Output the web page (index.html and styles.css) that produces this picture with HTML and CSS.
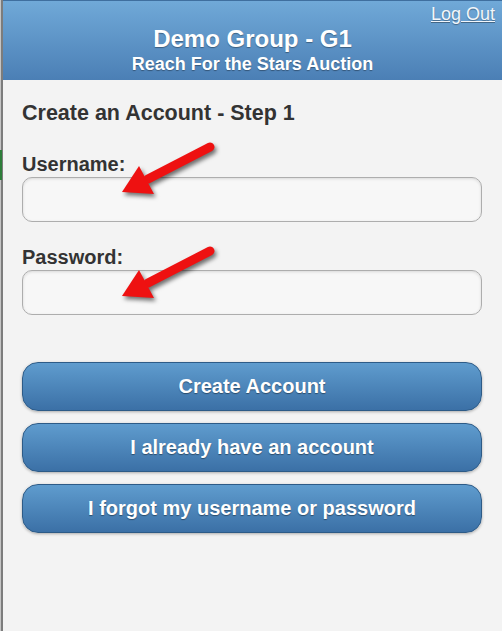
FILE: index.html
```html
<!DOCTYPE html>
<html lang="en">
<head>
   <meta charset="UTF-8">
   <meta name="viewport" content="width=device-width, initial-scale=1.0">
   <title>Create an Account</title>
   <link rel="stylesheet" href="styles.css">
</head>
<body>
<div class="page">
   <span class="edge-mark"></span>
   <header class="top">
      <a class="logout" href="#">Log Out</a>
      <h1>Demo Group - G1</h1>
      <p class="subtitle">Reach For the Stars Auction</p>
   </header>

   <main>
      <h2>Create an Account - Step 1</h2>
      <form class="signup">
         <div class="field">
            <label for="username">Username:</label>
            <input type="text" id="username">
            <svg class="arrow arrow-user" width="115" height="70" viewBox="0 0 115 70">
               <line x1="100" y1="12" x2="38" y2="44" stroke="#ee1111" stroke-width="9" stroke-linecap="round"/>
               <polygon points="12,57 29,31 44,59" fill="#ee1111"/>
            </svg>
         </div>
         <div class="field">
            <label for="password">Password:</label>
            <input type="password" id="password">
            <svg class="arrow arrow-pass" width="115" height="70" viewBox="0 0 115 70">
               <line x1="100" y1="12" x2="38" y2="44" stroke="#ee1111" stroke-width="9" stroke-linecap="round"/>
               <polygon points="12,57 29,31 44,59" fill="#ee1111"/>
            </svg>
         </div>

         <div class="actions">
            <button type="button">Create Account</button>
            <button type="button">I already have an account</button>
            <button type="button">I forgot my username or password</button>
         </div>
      </form>
   </main>
</div>
</body>
</html>
```

FILE: styles.css
```css
body {
   font-family: "Liberation Sans", Arial, sans-serif;
   margin: 0;
   padding: 0;
   background-color: #f3f3f3;
   color: #333;
}
.page {
   position: relative;
   min-height: 631px;
   border-left: 1px solid #c4c4c4;
   box-shadow: inset 2px 0 0 #7c7c7c;
   padding-left: 2px;
}
.edge-mark {
   position: absolute;
   left: -1px;
   top: 150px;
   width: 2px;
   height: 30px;
   background-color: #2e7d3a;
}
.top {
   position: relative;
   height: 79px;
   border-top: 1px solid #3f6f9f;
   background: linear-gradient(#70a9d8, #4b7fb5);
   color: white;
   text-align: center;
   text-shadow: 0 1px 1px rgba(0, 0, 0, 0.35);
}
.top h1 {
   margin: 0;
   padding-top: 24px;
   font-size: 24px;
   line-height: 28px;
}
.top .subtitle {
   margin: 0;
   font-size: 18px;
   font-weight: bold;
   line-height: 22px;
}
.logout {
   position: absolute;
   top: 2px;
   right: 7px;
   color: #f2f6fb;
   font-size: 18px;
   line-height: 22px;
}
main {
   padding: 0 20px 0 19px;
}
h2 {
   margin: 21px 0 28px;
   font-size: 21.5px;
   line-height: 24px;
}
.field {
   position: relative;
   margin-bottom: 24px;
}
label {
   display: block;
   font-size: 20px;
   font-weight: bold;
   line-height: 22px;
   margin-bottom: 2px;
}
input {
   display: block;
   box-sizing: border-box;
   width: 100%;
   height: 45px;
   border: 1px solid #adadad;
   border-radius: 10px;
   background-color: #f7f7f7;
   box-shadow: inset 0 1px 3px rgba(0, 0, 0, 0.12);
   font-family: inherit;
   font-size: 18px;
}
.arrow {
   position: absolute;
   left: 88px;
   filter: drop-shadow(2px 3px 2px rgba(0, 0, 0, 0.55));
}
.arrow-user {
   top: -18px;
}
.arrow-pass {
   top: -7px;
}
.actions {
   display: flex;
   flex-direction: column;
   gap: 12px;
   padding-top: 23px;
}
button {
   height: 49px;
   border: 1px solid #2d5b87;
   border-radius: 16px;
   background: linear-gradient(#5f9cce, #3b70a6);
   box-shadow: 0 1px 3px rgba(0, 0, 0, 0.3);
   color: white;
   font-family: inherit;
   font-size: 20px;
   font-weight: bold;
   text-shadow: 0 1px 1px rgba(0, 0, 0, 0.4);
   cursor: pointer;
}
button:hover {
   background: linear-gradient(#6aa6d6, #4579ae);
}
```
